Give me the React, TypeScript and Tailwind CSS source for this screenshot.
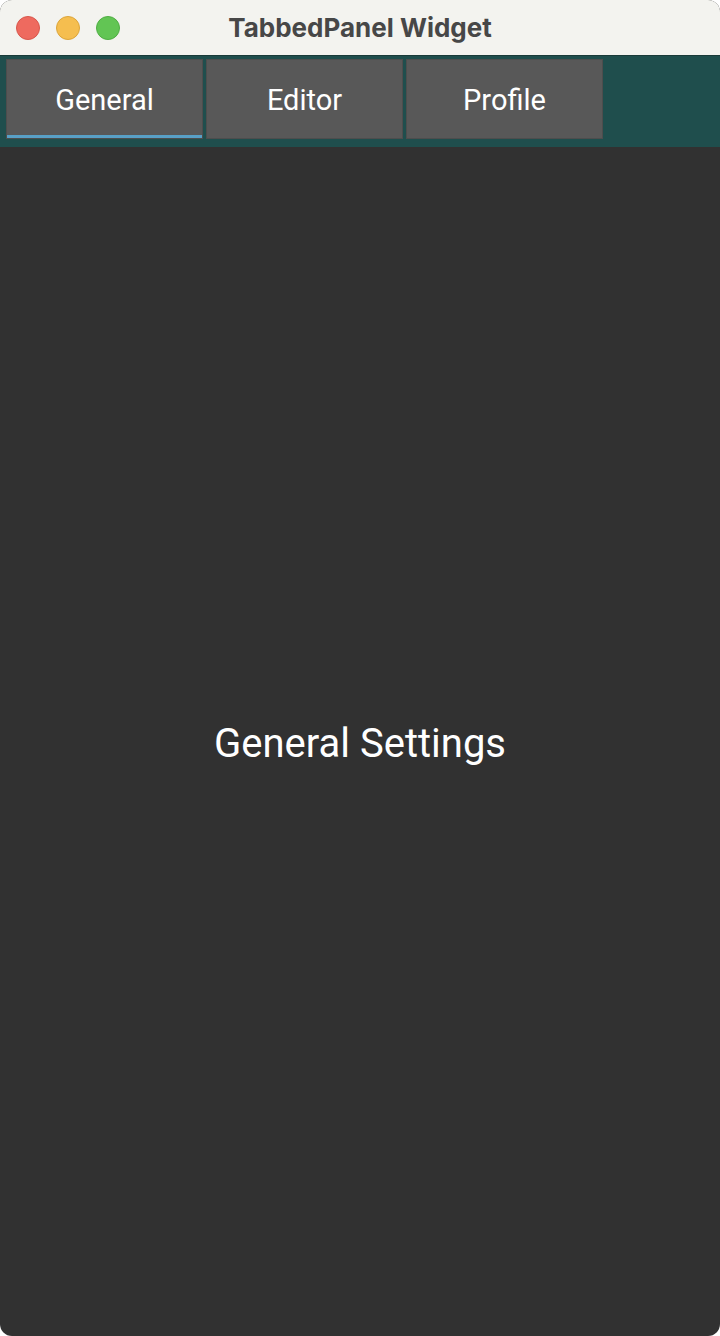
export default function App() {
  const tabs = ["General", "Editor", "Profile"];
  return (
    <div className="w-[720px] h-[1336px] bg-white">
      <div className="w-full h-full rounded-[12px] overflow-hidden flex flex-col bg-[#313131]">
        <div className="h-[56px] bg-[#f3f3ef] relative flex items-center justify-center border-b border-[#1a3a39]">
          <div className="absolute left-[16px] top-[16px] flex gap-[16px]">
            <div className="w-[24px] h-[24px] rounded-full bg-[#ee6a5f] border border-[#d8574c]" />
            <div className="w-[24px] h-[24px] rounded-full bg-[#f5be4f] border border-[#dca53a]" />
            <div className="w-[24px] h-[24px] rounded-full bg-[#62c554] border border-[#4fae43]" />
          </div>
          <span
            className="text-[26px] font-bold text-[#474747] leading-none pt-[1px]"
            style={{ fontFamily: 'Inter, "Noto Sans", sans-serif' }}
          >
            TabbedPanel Widget
          </span>
        </div>
        <div className="h-[91px] bg-[#1f4e4d] flex gap-[3px] pl-[6px] pt-[3px]">
          {tabs.map((t, i) => (
            <div
              key={t}
              className="w-[197px] h-[80px] bg-[#585858] border border-[#4d4d4d] relative flex items-center justify-center"
            >
              <span
                className="text-[29px] text-white leading-none pt-[2px]"
                style={{ fontFamily: 'Roboto, "Liberation Sans", sans-serif' }}
              >
                {t}
              </span>
              {i === 0 && (
                <div className="absolute left-0 right-0 bottom-0 h-[3px] bg-[#58a0c6]" />
              )}
            </div>
          ))}
        </div>
        <div className="flex-1 flex items-center justify-center">
          <span
            className="text-[40px] text-white leading-none pt-[4px]"
            style={{ fontFamily: 'Roboto, "Liberation Sans", sans-serif' }}
          >
            General Settings
          </span>
        </div>
      </div>
    </div>
  );
}
